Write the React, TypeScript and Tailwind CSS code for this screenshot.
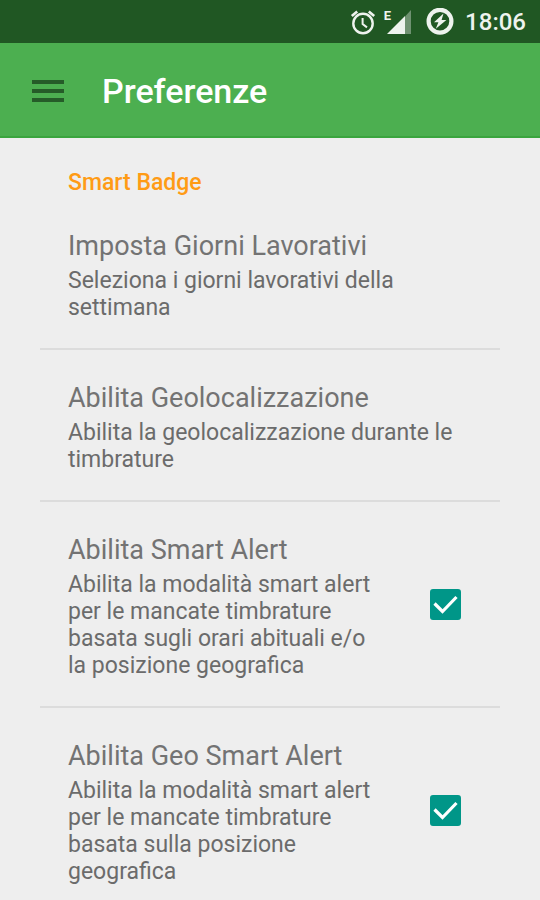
import { useState } from 'react';

interface Preference {
  id: string;
  title: string;
  summary: string;
  checkable?: boolean;
}

const preferences: Preference[] = [
  {
    id: 'giorni',
    title: 'Imposta Giorni Lavorativi',
    summary: 'Seleziona i giorni lavorativi della settimana',
  },
  {
    id: 'geo',
    title: 'Abilita Geolocalizzazione',
    summary: 'Abilita la geolocalizzazione durante le timbrature',
  },
  {
    id: 'smart-alert',
    title: 'Abilita Smart Alert',
    summary:
      'Abilita la modalità smart alert per le mancate timbrature basata sugli orari abituali e/o la posizione geografica',
    checkable: true,
  },
  {
    id: 'geo-smart-alert',
    title: 'Abilita Geo Smart Alert',
    summary: 'Abilita la modalità smart alert per le mancate timbrature basata sulla posizione geografica',
    checkable: true,
  },
];

function StatusBar() {
  return (
    <div className="flex h-[43px] items-center justify-end bg-[#205723] pr-3.5 text-[#eef3ee]">
      {/* Alarm */}
      <svg className="h-[26px] w-[26px]" viewBox="0 0 26 26" fill="none" stroke="currentColor">
        <circle cx="13" cy="14.5" r="9.7" strokeWidth="2.4" />
        <path d="M1.8 7 7.2 2.4M24.2 7l-5.4-4.6" strokeWidth="2.6" />
        <path d="M12.6 9v6l4.4 3.4" strokeWidth="2" />
      </svg>
      {/* Signal */}
      <div className="ml-2 flex h-[26px] items-start">
        <span className="text-[13px] leading-[13px] font-bold">E</span>
        <svg className="-ml-1 h-[26px] w-[25px]" viewBox="0 0 25 26">
          <path d="M18 7.5 24 1v24h-6z" fill="#6f9271" />
          <path d="M0 25 18 7v18z" fill="currentColor" />
        </svg>
      </div>
      {/* Battery */}
      <svg className="ml-3.5 h-7 w-7" viewBox="0 0 28 28">
        <circle cx="14" cy="13.2" r="11.4" fill="none" stroke="currentColor" strokeWidth="4.2" />
        <path d="M17.5 5.5 8 14.3h4.4l-2.6 6.4 10.6-8.6h-4.8z" fill="currentColor" />
      </svg>
      <span className="ml-[11px] text-[24px] leading-7 font-medium">18:06</span>
    </div>
  );
}

function AppBar() {
  return (
    <header className="flex h-[95px] items-center border-b-2 border-[#3aa53e] bg-[#4caf50] px-8 pt-0.5">
      <button type="button" aria-label="Menu" className="flex w-8 flex-col gap-[5px]">
        <span className="h-1 bg-[#255c28]" />
        <span className="h-1 bg-[#255c28]" />
        <span className="h-1 bg-[#255c28]" />
      </button>
      <h1 className="ml-[38px] text-[34px] leading-10 font-medium text-white">Preferenze</h1>
    </header>
  );
}

function PreferenceText({ title, summary }: { title: string; summary: string }) {
  return (
    <span className="flex flex-1 flex-col gap-[5px]">
      <span className="text-[27px] leading-8 text-[#737373]">{title}</span>
      <span className="text-[23px] leading-[27px] text-[#6b6b6b]">{summary}</span>
    </span>
  );
}

export default function App() {
  const [checked, setChecked] = useState<Record<string, boolean>>({
    'smart-alert': true,
    'geo-smart-alert': true,
  });

  const toggle = (id: string) => {
    setChecked((prev) => ({ ...prev, [id]: !prev[id] }));
  };

  return (
    <div className="min-h-screen bg-[#eeeeee] font-['Roboto',sans-serif]">
      <StatusBar />
      <AppBar />
      <main className="px-10">
        <h2 className="px-7 pt-[31px] text-[23px] leading-[27px] font-medium text-[#ff9b15]">Smart Badge</h2>
        <ul className="pt-0.5">
          {preferences.map((pref) => (
            <li
              key={pref.id}
              className="border-b-2 border-[#dcdcdc] pt-8 pb-[27px] pl-7 last:border-b-0 last:pb-2"
            >
              {pref.checkable ? (
                <label className="flex items-center pr-[39px]">
                  <PreferenceText title={pref.title} summary={pref.summary} />
                  <span className="mb-[5px] ml-12 grid">
                    <input
                      type="checkbox"
                      checked={!!checked[pref.id]}
                      onChange={() => toggle(pref.id)}
                      className="peer col-start-1 row-start-1 h-[31px] w-[31px] appearance-none rounded-[3px] border-3 border-[#737373] checked:border-[#009688] checked:bg-[#009688]"
                    />
                    <svg
                      className="pointer-events-none invisible col-start-1 row-start-1 h-[31px] w-[31px] peer-checked:visible"
                      viewBox="0 0 31 31"
                      fill="none"
                      stroke="white"
                      strokeWidth="3.2"
                    >
                      <path d="m4.5 14.5 8 8L26.5 8" />
                    </svg>
                  </span>
                </label>
              ) : (
                <button type="button" className="flex w-full pr-7 text-left">
                  <PreferenceText title={pref.title} summary={pref.summary} />
                </button>
              )}
            </li>
          ))}
        </ul>
      </main>
    </div>
  );
}
